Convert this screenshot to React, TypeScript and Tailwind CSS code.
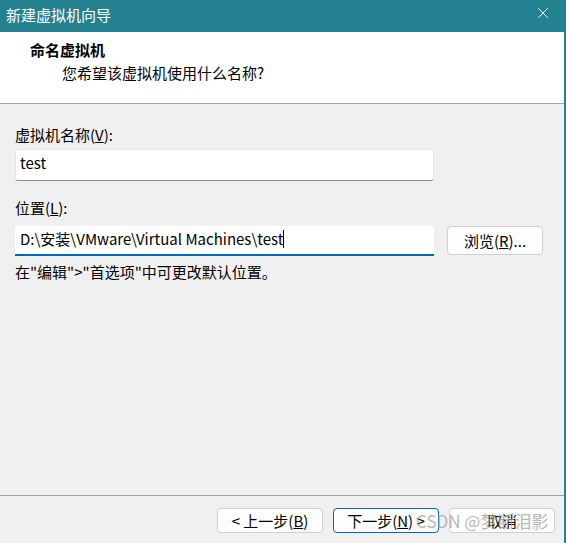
import { X } from "lucide-react";

const font = "font-['Segoe_UI','Noto_Sans_CJK_SC',sans-serif]";

function Btn({ children, primary }: { children: React.ReactNode; primary?: boolean }) {
  return (
    <button
      className={
        "h-[25px] w-[106px] rounded-[4px] bg-[#fdfdfd] text-[15px] leading-none text-black flex items-center justify-center " +
        (primary ? "border border-[#0067c0]" : "border border-[#d0d0d0]")
      }
    >
      {children}
    </button>
  );
}

export default function App() {
  return (
    <div className={`relative w-[566px] h-[543px] bg-[#24818f] flex flex-col overflow-hidden ${font}`}>
      {/* title bar */}
      <div className="h-[32px] flex items-center justify-between pl-[6px] pr-[14px] text-white">
        <span className="text-[15px] leading-none -mt-[4px]">新建虚拟机向导</span>
        <X className="w-[18px] h-[18px] -mt-[6px]" strokeWidth={1.2} />
      </div>

      <div className="flex-1 mr-[2px] bg-[#f0f0f0] flex flex-col">
        {/* header */}
        <div className="h-[72px] bg-white border-b border-[#a0a0a0] pt-[8px] pl-[30px]">
          <div className="text-[15px] leading-[20px] font-bold text-black">命名虚拟机</div>
          <div className="mt-[3px] pl-[32px] text-[15px] leading-[20px] text-black">您希望该虚拟机使用什么名称?</div>
        </div>

        {/* body */}
        <div className="flex-1 pl-[15px] pt-[21px] text-[15px] text-black">
          <div className="leading-[20px]">
            虚拟机名称(<span className="underline">V</span>):
          </div>
          <div className="mt-[4px] w-[419px] h-[32px] bg-white border border-[#e5e5e5] border-b-[#8a8a8a] rounded-[3px] pl-[4px] pb-[5px] flex items-center leading-none">
            test
          </div>

          <div className="mt-[17px] leading-[20px]">
            位置(<span className="underline">L</span>):
          </div>
          <div className="mt-[8px] flex items-start gap-[13px]">
            <div className="w-[419px] h-[30px] bg-white border-b-2 border-[#0067c0] rounded-t-[3px] pl-[5px] pb-[3px] flex items-center leading-none">
              <span>D:\安装\VMware\Virtual Machines\test</span>
              <span className="inline-block w-px h-[18px] bg-black" />
            </div>
            <button className="w-[96px] h-[29px] rounded-[4px] bg-[#fdfdfd] border border-[#d0d0d0] flex items-center justify-center leading-none">
              浏览(<span className="underline">R</span>)...
            </button>
          </div>
          <div className="mt-[6px] leading-[20px]">在"编辑"&gt;"首选项"中可更改默认位置。</div>
        </div>

        {/* footer */}
        <div className="h-[48px] border-t border-[#a0a0a0] flex items-start justify-end pt-[12px] pr-[9px] gap-[10px]">
          <Btn>&lt; 上一步(<span className="underline">B</span>)</Btn>
          <Btn primary>下一步(<span className="underline">N</span>) &gt;</Btn>
          <Btn>取消</Btn>
        </div>
      </div>

      {/* watermark */}
      <div className="absolute left-[416px] top-[512px] text-[17px] leading-none text-[#a0a0a0]/75 font-['Noto_Sans_CJK_SC',sans-serif]">
        CSDN @梦断泪影
      </div>
    </div>
  );
}
